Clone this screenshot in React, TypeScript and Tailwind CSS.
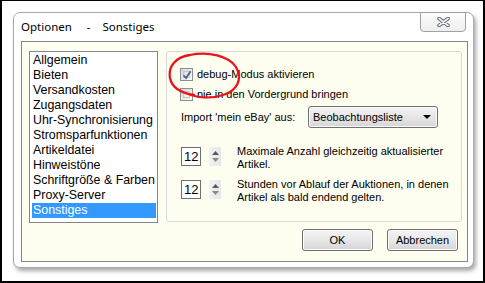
import { ReactNode } from 'react';

const items = [
  'Allgemein',
  'Bieten',
  'Versandkosten',
  'Zugangsdaten',
  'Uhr-Synchronisierung',
  'Stromsparfunktionen',
  'Artikeldatei',
  'Hinweistöne',
  'Schriftgröße & Farben',
  'Proxy-Server',
  'Sonstiges',
];

function CheckBox({ checked, children }: { checked?: boolean; children: ReactNode }) {
  return (
    <div className="flex h-[20px] items-center">
      <div className="relative h-[13px] w-[13px] border border-[#8e8f8f] bg-gradient-to-br from-[#d6d6d6] to-[#fafafa] p-[2px]">
        <div className="h-full w-full border border-[#c8c8c8] bg-gradient-to-br from-[#dedede] to-[#f8f8f8]" />
        {checked && (
          <svg className="absolute left-[1px] top-[1px]" width="10" height="10" viewBox="0 0 10 10">
            <path d="M1.5 5.2 L4 8 L8.6 1.2" fill="none" stroke="#4a5c96" strokeWidth="1.7" />
          </svg>
        )}
      </div>
      <span className="ml-[4px]">{children}</span>
    </div>
  );
}

function Spinner({ value }: { value: string }) {
  return (
    <div className="mt-[2px] flex shrink-0 items-start">
      <div className="flex h-[19px] w-[20px] items-center border border-[#6f6f6f] bg-white pl-[2px] text-[13px] leading-none">
        {value}
      </div>
      <div className="ml-[8px] flex h-[19px] w-[12px] flex-col items-center justify-around bg-gradient-to-r from-[#f2f2f2] to-[#e6e6e6] py-[2px]">
        <svg width="7" height="4" viewBox="0 0 7 4">
          <path d="M0 4 L3.5 0 L7 4 Z" fill="#5a5a5a" />
        </svg>
        <svg width="7" height="4" viewBox="0 0 7 4">
          <path d="M0 0 L7 0 L3.5 4 Z" fill="#8a8a8a" />
        </svg>
      </div>
    </div>
  );
}

function Button({ children }: { children: ReactNode }) {
  return (
    <div className="flex h-[22px] w-[71px] items-center justify-center rounded-[3px] border border-[#707070] bg-gradient-to-b from-[#f4f4f4] via-[#e8e8e8] to-[#d4d4d4] text-[11px] shadow-[inset_0_0_0_1px_#fbfbfb]">
      {children}
    </div>
  );
}

export default function App() {
  return (
    <div className="h-[283px] w-[485px] border-b-2 border-l-2 border-r-2 border-t border-black bg-white pl-[11px] pt-[11px] font-['Liberation_Sans',Arial,sans-serif] text-black">
      <div className="relative flex h-[256px] w-[461px] flex-col rounded-[7px] border border-[#a9a9a9] bg-white shadow-[2px_3px_4px_rgba(0,0,0,0.35)]">
        <div className="flex h-[28px] items-start justify-between pl-[7px] pr-[7px]">
          <span className="mt-[6px] whitespace-pre font-['Noto_Sans',sans-serif] text-[11.5px] leading-[16px]">
            {'Optionen     -    Sonstiges'}
          </span>
          <div className="-mt-px flex h-[20px] w-[46px] items-center justify-center rounded-b-[4px] border border-[#a0a0a0] bg-gradient-to-b from-[#fdfdfd] to-[#eeeeee]">
            <svg width="13" height="10" viewBox="0 0 13 10">
              <path d="M2 1.5 L11 8.5 M11 1.5 L2 8.5" stroke="#5e6678" strokeWidth="3.6" strokeLinecap="round" />
              <path d="M2 1.5 L11 8.5 M11 1.5 L2 8.5" stroke="#f4f4f4" strokeWidth="1.6" strokeLinecap="round" />
            </svg>
          </div>
        </div>

        <div className="ml-[7px] flex h-[221px] w-[447px] flex-col border border-[#858585] bg-[#fdfdf0] pl-[7px] pt-[9px]">
          <div className="flex gap-[8px]">
            <div className="h-[172px] w-[129px] border border-[#828790] bg-white p-px text-[12.4px] leading-[15px]">
              {items.map((item) =>
                item === 'Sonstiges' ? (
                  <div key={item} className="ml-px h-[15px] bg-[#3399ff] pl-[1px] text-white">
                    {item}
                  </div>
                ) : (
                  <div key={item} className="h-[15px] pl-[2px]">
                    {item}
                  </div>
                ),
              )}
            </div>

            <div className="relative h-[171px] w-[296px] rounded-[3px] border border-[#d5dbd9] pl-[13px] pt-[12px] text-[11px]">
              <CheckBox checked>debug-Modus aktivieren</CheckBox>
              <CheckBox>nie in den Vordergrund bringen</CheckBox>
              <div className="mt-[2px] flex items-center">
                <span className="w-[128px] pl-px">Import 'mein eBay' aus:</span>
                <div className="flex h-[22px] w-[130px] items-center justify-between rounded-[3px] border border-[#707070] bg-gradient-to-b from-[#f3f3f3] via-[#e6e6e6] to-[#d6d6d6] pl-[4px] pr-[6px] shadow-[inset_0_0_0_1px_#fafafa]">
                  <span>Beobachtungsliste</span>
                  <svg width="8" height="4" viewBox="0 0 8 4">
                    <path d="M0 0 L8 0 L4 4 Z" fill="#000" />
                  </svg>
                </div>
              </div>

              <div className="mt-[17px] flex items-start pl-px">
                <Spinner value="12" />
                <div className="ml-[16px] leading-[13px]">
                  Maximale Anzahl gleichzeitig aktualisierter
                  <br />
                  Artikel.
                </div>
              </div>
              <div className="mt-[7px] flex items-start pl-px">
                <Spinner value="12" />
                <div className="ml-[16px] leading-[13px]">
                  Stunden vor Ablauf der Auktionen, in denen
                  <br />
                  Artikel als bald endend gelten.
                </div>
              </div>

              <svg className="pointer-events-none absolute left-0 top-0" width="100" height="60" viewBox="167 52 100 60">
                <path
                  d="M194 95 C181 93 172 88 170 78 C168 66 176 57 190 55 C208 51 229 56 236 67 C243 79 237 91 223 95 C211 99 197 98 186 93"
                  fill="none"
                  stroke="#e8141b"
                  strokeWidth="2.3"
                  strokeLinecap="round"
                />
              </svg>
            </div>
          </div>

          <div className="mt-[6px] flex justify-end gap-[14px] pr-[9px]">
            <Button>OK</Button>
            <Button>Abbrechen</Button>
          </div>
        </div>
      </div>
    </div>
  );
}
